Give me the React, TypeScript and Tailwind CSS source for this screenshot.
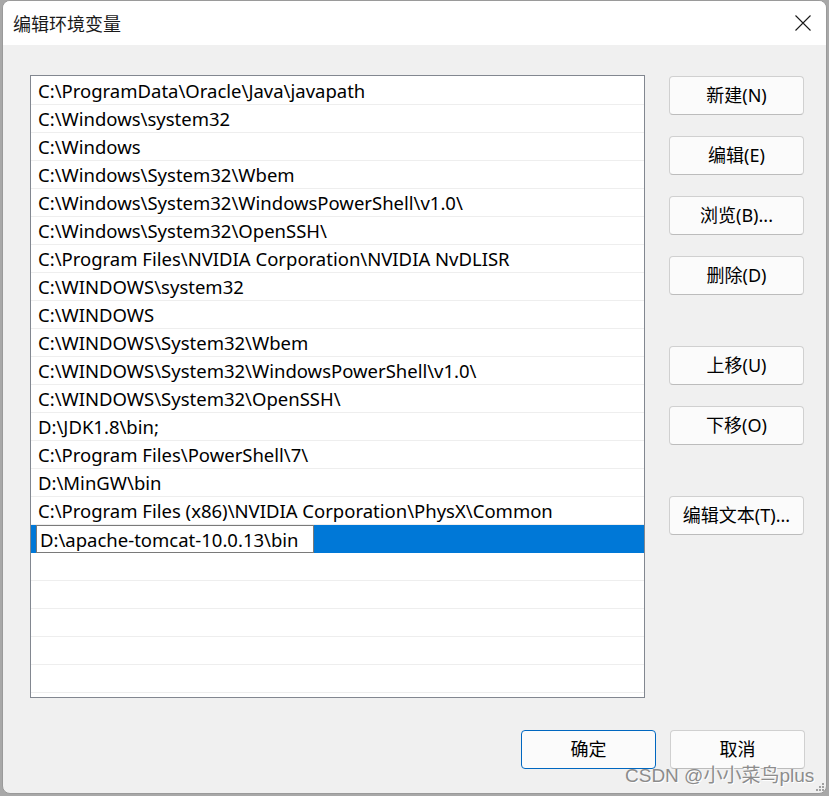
import React from "react";

const paths = [
  "C:\\ProgramData\\Oracle\\Java\\javapath",
  "C:\\Windows\\system32",
  "C:\\Windows",
  "C:\\Windows\\System32\\Wbem",
  "C:\\Windows\\System32\\WindowsPowerShell\\v1.0\\",
  "C:\\Windows\\System32\\OpenSSH\\",
  "C:\\Program Files\\NVIDIA Corporation\\NVIDIA NvDLISR",
  "C:\\WINDOWS\\system32",
  "C:\\WINDOWS",
  "C:\\WINDOWS\\System32\\Wbem",
  "C:\\WINDOWS\\System32\\WindowsPowerShell\\v1.0\\",
  "C:\\WINDOWS\\System32\\OpenSSH\\",
  "D:\\JDK1.8\\bin;",
  "C:\\Program Files\\PowerShell\\7\\",
  "D:\\MinGW\\bin",
  "C:\\Program Files (x86)\\NVIDIA Corporation\\PhysX\\Common",
];

const font = "[font-family:'Segoe_UI','Noto_Sans','Noto_Sans_CJK_SC',sans-serif]";

function WinButton({ label, className = "", primary = false }: { label: string; className?: string; primary?: boolean }) {
  return (
    <button
      className={`w-[135px] h-[39px] rounded-[4px] bg-[#fbfbfb] text-[18px] text-black flex items-center justify-center ${
        primary ? "border border-[#0067c0]" : "border border-[#d0d0d0] border-b-[#bcbcbc]"
      } ${className}`}
    >
      {label}
    </button>
  );
}

export default function App() {
  return (
    <div className={`w-[829px] h-[796px] bg-[#a8a8a8] overflow-hidden ${font}`}>
      <div className="relative ml-[2px] w-[825px] h-[794px] rounded-t-[8px] rounded-b-[8px] overflow-hidden border border-[#9a9a9a] flex flex-col bg-[#f0f0f0]">
        {/* Title bar */}
        <div className="h-[44px] bg-white flex items-center justify-between shrink-0">
          <span className="pl-[10px] text-[18px] text-[#1a1a1a] [font-family:'Noto_Sans_CJK_SC',sans-serif]">编辑环境变量</span>
          <svg width="16" height="16" viewBox="0 0 16 16" className="mr-[15px]">
            <path d="M0.5 0.5 L15.5 15.5 M15.5 0.5 L0.5 15.5" stroke="#1a1a1a" strokeWidth="1.1" fill="none" />
          </svg>
        </div>

        {/* Body */}
        <div className="flex-1 flex flex-col pl-[27px] pr-[21px] pt-[30px]">
          <div className="flex gap-[24px]">
            {/* List */}
            <div className="w-[615px] h-[623px] bg-white border border-[#828790] pt-[1px] overflow-hidden">
              {paths.map((p) => (
                <div key={p} className="h-[28px] border-b border-[#eeeeee] flex items-center pl-[7px] pt-[1px] text-[18.5px] text-black whitespace-nowrap">
                  {p}
                </div>
              ))}
              <div className="h-[28px] bg-[#0078d7] flex items-stretch pl-[5px]">
                <div className="w-[278px] bg-white border border-[#7a7a7a] flex items-center pl-[3px] pt-[1px] text-[18.5px] text-black whitespace-nowrap">
                  D:\apache-tomcat-10.0.13\bin
                </div>
              </div>
              {[0, 1, 2, 3, 4].map((i) => (
                <div key={i} className="h-[28px] border-b border-[#eeeeee]" />
              ))}
            </div>

            {/* Side buttons */}
            <div className="flex flex-col pt-[1px]">
              <WinButton label="新建(N)" />
              <WinButton label="编辑(E)" className="mt-[21px]" />
              <WinButton label="浏览(B)..." className="mt-[21px]" />
              <WinButton label="删除(D)" className="mt-[21px]" />
              <WinButton label="上移(U)" className="mt-[51px]" />
              <WinButton label="下移(O)" className="mt-[21px]" />
              <WinButton label="编辑文本(T)..." className="mt-[51px]" />
            </div>
          </div>

          <div className="flex justify-end gap-[14px] mt-[32px]">
            <WinButton label="确定" primary />
            <WinButton label="取消" />
          </div>
        </div>

        {/* Resize grip */}
        <svg width="10" height="10" viewBox="0 0 10 10" className="absolute right-[1px] bottom-[1px]">
          <rect x="7" y="1" width="2" height="2" fill="#a0a0a0" />
          <rect x="4" y="4" width="2" height="2" fill="#a0a0a0" />
          <rect x="7" y="4" width="2" height="2" fill="#a0a0a0" />
          <rect x="1" y="7" width="2" height="2" fill="#a0a0a0" />
          <rect x="4" y="7" width="2" height="2" fill="#a0a0a0" />
          <rect x="7" y="7" width="2" height="2" fill="#a0a0a0" />
        </svg>

        {/* Watermark */}
        <span className="absolute left-[622px] top-[761px] text-[19px] text-[#8c8c8c] [text-shadow:1px_1px_0_#ffffff] [font-family:'Liberation_Sans','Noto_Sans_CJK_SC',sans-serif]">
          CSDN @小小菜鸟plus
        </span>
      </div>
    </div>
  );
}
